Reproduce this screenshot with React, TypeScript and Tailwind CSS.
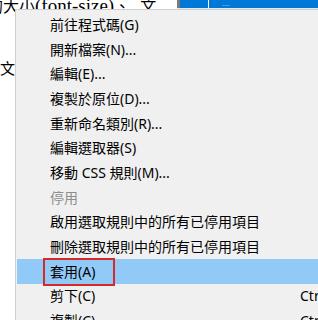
const items: { label: string; shortcut?: string; disabled?: boolean; active?: boolean }[] = [
  { label: "前往程式碼(G)" },
  { label: "開新檔案(N)..." },
  { label: "編輯(E)..." },
  { label: "複製於原位(D)..." },
  { label: "重新命名類別(R)..." },
  { label: "編輯選取器(S)" },
  { label: "移動 CSS 規則(M)..." },
  { label: "停用", disabled: true },
  { label: "啟用選取規則中的所有已停用項目" },
  { label: "刪除選取規則中的所有已停用項目" },
  { label: "套用(A)", active: true },
  { label: "剪下(C)", shortcut: "Ctrl+X" },
  { label: "複製(C)", shortcut: "Ctrl+C" },
];

const App = () => {
  return (
    <div className="relative w-[318px] h-[320px] overflow-hidden bg-white">
      {/* page text behind the menu */}
      <div className="font-['Liberation_Serif','Noto_Sans_CJK_TC',serif] text-black">
        <div className="whitespace-nowrap ml-[-13px] mt-[-4px] leading-[20px] text-[16px]">
          的大小<span className="text-[19px]">(font-size)</span>、<span className="ml-[10px]">文</span>
        </div>
        <div className="whitespace-nowrap mt-[42px] leading-[20px] text-[15px]">文</div>
      </div>

      {/* strip of another panel at the top right */}
      <div className="absolute top-0 left-[177px] right-0 h-[8px] flex border-l-[3px] border-[#7a7a7a] bg-[#0078d7]">
        <div className="w-[29px] border-r border-white" />
        <div className="ml-[13px] text-[7px] leading-[8px] text-[#9cc6ec] font-['Noto_Sans',sans-serif]">
          ....
        </div>
      </div>
      <div className="absolute top-[8px] left-[177px] right-0 h-[1px] bg-[#dbe9f7]" />

      {/* context menu */}
      <div className="absolute left-[15px] top-[9px] w-[320px] h-[330px] bg-[#f0f0f0] border-l border-t border-[#cfcfcf] pt-[2px] pl-[1px] font-['Noto_Sans','Noto_Sans_CJK_TC',sans-serif] text-[14px]">
        {items.map((it) => (
          <div
            key={it.label}
            className={`relative flex items-center h-[24.7px] pl-[33px] whitespace-nowrap ${
              it.active ? "bg-[#91c9f7]" : ""
            } ${it.disabled ? "text-[#8d8d8d]" : "text-black"}`}
          >
            <span className="w-[250px] shrink-0">{it.label}</span>
            {it.shortcut && <span>{it.shortcut}</span>}
            {it.active && (
              <div className="absolute left-[26px] top-[-1px] w-[72px] h-[28px] border-2 border-[#d22b2b]" />
            )}
          </div>
        ))}
      </div>
    </div>
  );
};

export default App;
